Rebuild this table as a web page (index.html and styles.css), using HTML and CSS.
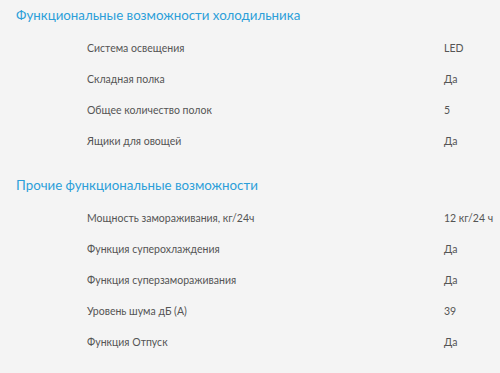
FILE: index.html
```html
<!DOCTYPE html>
<html lang="ru">
<head>
<meta charset="utf-8">
<link rel="stylesheet" href="styles.css">
</head>
<body>
<section class="group">
  <h2 class="group-title">Функциональные возможности холодильника</h2>
  <dl class="specs">
    <div class="row"><dt>Система освещения</dt><dd>LED</dd></div>
    <div class="row"><dt>Складная полка</dt><dd>Да</dd></div>
    <div class="row"><dt>Общее количество полок</dt><dd>5</dd></div>
    <div class="row"><dt>Ящики для овощей</dt><dd>Да</dd></div>
  </dl>
</section>
<section class="group">
  <h2 class="group-title">Прочие функциональные возможности</h2>
  <dl class="specs">
    <div class="row"><dt>Мощность замораживания, кг/24ч</dt><dd>12 кг/24 ч</dd></div>
    <div class="row"><dt>Функция суперохлаждения</dt><dd>Да</dd></div>
    <div class="row"><dt>Функция суперзамораживания</dt><dd>Да</dd></div>
    <div class="row"><dt>Уровень шума дБ (А)</dt><dd>39</dd></div>
    <div class="row"><dt>Функция Отпуск</dt><dd>Да</dd></div>
  </dl>
</section>
</body>
</html>
```
FILE: styles.css
```css
html, body {
  margin: 0;
  padding: 0;
  background: #f4f4f4;
}
body {
  font-family: "Lato", "Open Sans", sans-serif;
  color: #555;
  width: 500px;
  height: 373px;
  overflow: hidden;
}
.group {
  padding: 4px 0 0 16px;
}
.group + .group {
  padding-top: 18px;
}
.group-title {
  margin: 0;
  font-weight: 400;
  font-size: 13.3px;
  line-height: 22px;
  color: #2c9fd9;
}
.specs {
  margin: 0;
  padding: 6px 0 0 71px;
}
.row {
  display: grid;
  grid-template-columns: 357px 1fr;
  height: 31px;
  align-items: center;
  font-size: 10.5px;
}
.row dt, .row dd {
  margin: 0;
}
```
